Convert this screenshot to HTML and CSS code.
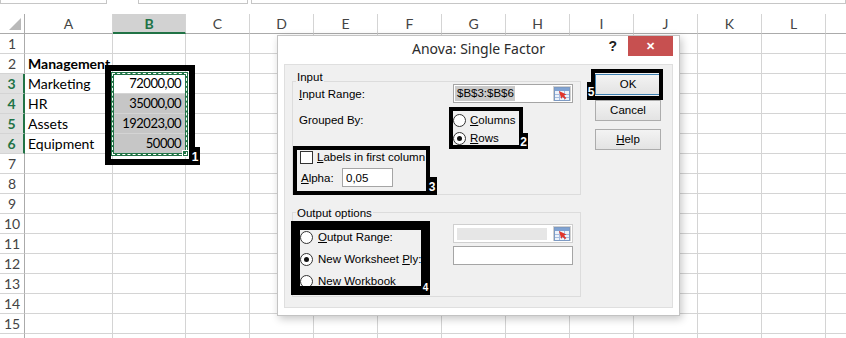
FILE: index.html
```html
<!DOCTYPE html>
<html lang="en">
<head>
    <meta charset="UTF-8">
    <title>Anova: Single Factor</title>
    <link rel="stylesheet" href="styles.css">
</head>
<body>
    <div class="topbar">
        <div class="namebox"></div>
        <div class="fxbox"></div>
        <div class="formula"></div>
    </div>

    <div class="sheet">
        <div class="corner"></div><div class="ch">A</div><div class="ch sel">B</div><div class="ch">C</div><div class="ch">D</div><div class="ch">E</div><div class="ch">F</div><div class="ch">G</div><div class="ch">H</div><div class="ch">I</div><div class="ch">J</div><div class="ch">K</div><div class="ch">L</div><div class="ch"></div>
        <div class="rh">1</div><div></div><div></div><div></div><div></div><div></div><div></div><div></div><div></div><div></div><div></div><div></div><div></div><div></div>
        <div class="rh">2</div><div class="bold">Management</div><div></div><div></div><div></div><div></div><div></div><div></div><div></div><div></div><div></div><div></div><div></div><div></div>
        <div class="rh sel">3</div><div>Marketing</div><div class="num">72000,00</div><div></div><div></div><div></div><div></div><div></div><div></div><div></div><div></div><div></div><div></div><div></div>
        <div class="rh sel">4</div><div>HR</div><div class="num hl">35000,00</div><div></div><div></div><div></div><div></div><div></div><div></div><div></div><div></div><div></div><div></div><div></div>
        <div class="rh sel">5</div><div>Assets</div><div class="num hl">192023,00</div><div></div><div></div><div></div><div></div><div></div><div></div><div></div><div></div><div></div><div></div><div></div>
        <div class="rh sel">6</div><div>Equipment</div><div class="num hl">50000</div><div></div><div></div><div></div><div></div><div></div><div></div><div></div><div></div><div></div><div></div><div></div>
        <div class="rh">7</div><div></div><div></div><div></div><div></div><div></div><div></div><div></div><div></div><div></div><div></div><div></div><div></div><div></div>
        <div class="rh">8</div><div></div><div></div><div></div><div></div><div></div><div></div><div></div><div></div><div></div><div></div><div></div><div></div><div></div>
        <div class="rh">9</div><div></div><div></div><div></div><div></div><div></div><div></div><div></div><div></div><div></div><div></div><div></div><div></div><div></div>
        <div class="rh">10</div><div></div><div></div><div></div><div></div><div></div><div></div><div></div><div></div><div></div><div></div><div></div><div></div><div></div>
        <div class="rh">11</div><div></div><div></div><div></div><div></div><div></div><div></div><div></div><div></div><div></div><div></div><div></div><div></div><div></div>
        <div class="rh">12</div><div></div><div></div><div></div><div></div><div></div><div></div><div></div><div></div><div></div><div></div><div></div><div></div><div></div>
        <div class="rh">13</div><div></div><div></div><div></div><div></div><div></div><div></div><div></div><div></div><div></div><div></div><div></div><div></div><div></div>
        <div class="rh">14</div><div></div><div></div><div></div><div></div><div></div><div></div><div></div><div></div><div></div><div></div><div></div><div></div><div></div>
        <div class="rh">15</div><div></div><div></div><div></div><div></div><div></div><div></div><div></div><div></div><div></div><div></div><div></div><div></div><div></div>
        <div class="rh"></div><div></div><div></div><div></div><div></div><div></div><div></div><div></div><div></div><div></div><div></div><div></div><div></div><div></div>
    </div>

    <!-- copy range marching ants around B3:B6 -->
    <div class="selection"></div>

    <div class="dialog">
        <div class="titlebar">
            <div class="title">Anova: Single Factor</div>
            <div class="controls">
                <span class="help">?</span>
                <span class="close">&#x2715;</span>
            </div>
        </div>
        <div class="panel">
            <div class="groups">
                <div class="group group-input">
                    <span class="group-title">Input</span>
                    <div class="field">
                        <span class="label-col"><u>I</u>nput Range:</span>
                        <div class="textbox">
                            <span class="value"><span class="picked">$B$3:$B$6</span></span>
                            <span class="picker">
                                <svg width="16" height="14" viewBox="0 0 16 14">
                                    <rect x="0.5" y="0.5" width="15" height="13" fill="#eef3fa" stroke="#7d9ac3"/>
                                    <rect x="1" y="1" width="14" height="3" fill="#7fa2d2"/>
                                    <path d="M1 7.5H15M1 10.5H15M5.5 4V13M10.5 4V13" stroke="#a7bde0" fill="none"/>
                                    <polygon points="5,4 12.5,7.5 9.8,8.4 12.3,11 11,12.3 8.5,9.7 7.3,12" fill="#e2342b"/>
                                </svg>
                            </span>
                        </div>
                    </div>
                    <div class="field grouped">
                        <span class="label-col">Grouped By:</span>
                        <div class="radios">
                            <div class="opt"><span class="radio"></span><span><u>C</u>olumns</span></div>
                            <div class="opt"><span class="radio on"></span><span><u>R</u>ows</span></div>
                        </div>
                    </div>
                    <div class="check-row"><span class="checkbox"></span><span><u>L</u>abels in first column</span></div>
                    <div class="alpha-row">
                        <span class="alpha-label"><u>A</u>lpha:</span>
                        <div class="textbox small">0,05</div>
                    </div>
                </div>

                <div class="group group-output">
                    <span class="group-title">Output options</span>
                    <div class="out-options">
                        <div class="opt tall"><span class="radio"></span><span><u>O</u>utput Range:</span></div>
                        <div class="opt tall"><span class="radio on"></span><span>New Worksheet <u>P</u>ly:</span></div>
                        <div class="opt tall"><span class="radio"></span><span>New <u>W</u>orkbook</span></div>
                    </div>
                    <div class="out-boxes">
                        <div class="textbox disabled">
                            <span class="value"><span class="grey"></span></span>
                            <span class="picker">
                                <svg width="16" height="14" viewBox="0 0 16 14">
                                    <rect x="0.5" y="0.5" width="15" height="13" fill="#eef3fa" stroke="#7d9ac3"/>
                                    <rect x="1" y="1" width="14" height="3" fill="#7fa2d2"/>
                                    <path d="M1 7.5H15M1 10.5H15M5.5 4V13M10.5 4V13" stroke="#a7bde0" fill="none"/>
                                    <polygon points="5,4 12.5,7.5 9.8,8.4 12.3,11 11,12.3 8.5,9.7 7.3,12" fill="#e2342b"/>
                                </svg>
                            </span>
                        </div>
                        <div class="textbox"></div>
                    </div>
                </div>
            </div>

            <div class="buttons">
                <div class="btn default">OK</div>
                <div class="btn">Cancel</div>
                <div class="btn"><u>H</u>elp</div>
            </div>
        </div>
    </div>

    <!-- numbered callouts drawn over the screenshot -->
    <div class="mark m1"><span class="mark-num">1</span></div>
    <div class="mark m2"><span class="mark-num">2</span></div>
    <div class="mark m3"><span class="mark-num">3</span></div>
    <div class="mark m4"><span class="mark-num">4</span></div>
    <div class="mark m5"><span class="mark-num">5</span></div>
</body>
</html>
```

FILE: styles.css
```css
body {
    margin: 0;
    width: 846px;
    height: 338px;
    overflow: hidden;
    position: relative;
    background: #fff;
    font-family: Lato, "Liberation Sans", sans-serif;
}

/* remains of the name box / formula bar */
.topbar {
    display: flex;
    height: 14px;
}
.topbar div {
    height: 4px;
    box-sizing: border-box;
    border: 1px solid #c6c6c6;
    border-top: none;
}
.namebox {
    width: 107px;
}
.fxbox {
    width: 110px;
    margin-left: 31px;
}
.formula {
    flex: 1;
    margin-left: 3px;
}

/* worksheet */
.sheet {
    display: grid;
    grid-template-columns: 25px 88px 73px repeat(11, 64px);
    grid-auto-rows: 20px;
    width: 890px;
    font-size: 14px;
}
.sheet > div {
    box-sizing: border-box;
    border-right: 1px solid #d4d4d4;
    border-bottom: 1px solid #d4d4d4;
    padding: 0 3px;
    line-height: 19px;
    white-space: nowrap;
    color: #000;
}
.sheet .ch {
    text-align: center;
    color: #444;
    border-bottom-color: #ababab;
}
.sheet .ch.sel {
    background: #d2d2d2;
    color: #217346;
    font-weight: bold;
    border-bottom: 2px solid #217346;
}
.sheet .rh {
    padding: 0;
    text-align: center;
    color: #444;
    border-right-color: #ababab;
}
.sheet .rh.sel {
    background: #e1e1e1;
    color: #217346;
    font-weight: bold;
    border-right: 2px solid #217346;
}
.sheet .corner {
    position: relative;
    border-right-color: #ababab;
    border-bottom-color: #ababab;
}
.corner::after {
    content: "";
    position: absolute;
    right: 3px;
    bottom: 3px;
    border-left: 12px solid transparent;
    border-bottom: 12px solid #b9b9b9;
}
.sheet .num {
    text-align: right;
    font-size: 13px;
    letter-spacing: -0.5px;
    padding-right: 4px;
}
.sheet .bold {
    font-weight: bold;
}
.sheet .hl {
    background: #c6c6c6;
}

.selection {
    position: absolute;
    left: 111px;
    top: 72px;
    width: 77px;
    height: 84px;
    box-sizing: border-box;
    border: 3px solid #217346;
}
.selection::after {
    content: "";
    position: absolute;
    left: -2px;
    top: -2px;
    right: -2px;
    bottom: -2px;
    border: 1px dashed #fff;
}
.selection::before {
    content: "";
    position: absolute;
    right: -4px;
    bottom: -4px;
    width: 5px;
    height: 5px;
    background: #217346;
    border: 1px solid #fff;
}

/* dialog */
.dialog {
    position: absolute;
    left: 277px;
    top: 35px;
    width: 403px;
    height: 281px;
    box-sizing: border-box;
    border: 1px solid #c3c3c3;
    background: #fff;
    box-shadow: 2px 3px 8px rgba(0, 0, 0, 0.22);
    padding: 0 6px 7px;
    display: flex;
    flex-direction: column;
    font-family: "Liberation Sans", Arial, sans-serif;
    font-size: 11.5px;
    color: #000;
}
.titlebar {
    height: 28px;
    display: grid;
    grid-template-columns: 1fr auto 1fr;
}
.title {
    grid-column: 2;
    font-family: "Noto Sans", sans-serif;
    font-size: 14px;
    line-height: 26px;
    color: #2b2b2b;
}
.controls {
    justify-self: end;
    display: flex;
    align-items: flex-start;
}
.help {
    font-weight: bold;
    font-size: 14px;
    line-height: 20px;
    margin-right: 11px;
    color: #222;
}
.close {
    width: 45px;
    height: 20px;
    background: #c75050;
    color: #fff;
    text-align: center;
    line-height: 20px;
    font-size: 11px;
    font-weight: bold;
}
.panel {
    flex: 1;
    display: flex;
    background: #f0f0f0;
    border: 1px solid #dfdfdf;
    padding-left: 7px;
}
.groups {
    width: 289px;
}
.group {
    position: relative;
    box-sizing: border-box;
    border: 1px solid #dcdcdc;
}
.group-title {
    position: absolute;
    left: 3px;
    padding: 0 1px;
    line-height: 14px;
    background: #f0f0f0;
}
.group-input {
    margin-top: 16px;
    height: 114px;
    padding: 2px 0 0 6px;
}
.group-input .group-title {
    top: -12px;
}
.group-output {
    margin-top: 17px;
    height: 85px;
    display: flex;
    padding-left: 7px;
}
.group-output .group-title {
    top: -7px;
}

.field {
    display: flex;
    align-items: center;
}
.label-col {
    width: 154px;
}
.field.grouped {
    align-items: flex-start;
    margin-top: 8px;
}
.field.grouped .label-col {
    line-height: 18px;
}
.opt {
    display: flex;
    align-items: center;
    height: 18px;
}
.opt .radio {
    margin-right: 4px;
}
.opt.tall {
    height: 22px;
}
.opt.tall .radio {
    margin-right: 5px;
}
.radio {
    display: inline-block;
    position: relative;
    width: 13px;
    height: 13px;
    box-sizing: border-box;
    border: 1px solid #333;
    border-radius: 50%;
    background: #fff;
}
.radio.on::after {
    content: "";
    position: absolute;
    left: 3px;
    top: 3px;
    width: 5px;
    height: 5px;
    border-radius: 50%;
    background: #111;
}
.check-row {
    display: flex;
    align-items: center;
    height: 14px;
    margin-top: 3px;
    padding-left: 1px;
}
.checkbox {
    width: 13px;
    height: 13px;
    box-sizing: border-box;
    border: 1px solid #333;
    background: #fff;
    margin-right: 4px;
}
.alpha-row {
    display: flex;
    align-items: center;
    margin-top: 4px;
    padding-left: 2px;
}
.alpha-label {
    width: 41px;
}

.textbox {
    width: 120px;
    height: 19px;
    box-sizing: border-box;
    border: 1px solid #a5a5a5;
    background: #fff;
    display: flex;
    align-items: center;
    padding: 0 1px 0 1px;
}
.textbox.small {
    width: 51px;
    padding-left: 3px;
}
.textbox .value {
    flex: 1;
    display: flex;
}
.picked {
    background: #cacaca;
    line-height: 15px;
    padding: 0 1px 0 2px;
}
.picker {
    display: flex;
    width: 18px;
    height: 15px;
    align-items: center;
    justify-content: center;
    background: #e9e9e9;
    border: 1px solid #d0d0d0;
    box-sizing: border-box;
}
.textbox.disabled {
    border-color: #cfcfcf;
    padding-left: 3px;
}
.grey {
    width: 90px;
    height: 12px;
    background: #e6e6e6;
}
.out-options {
    width: 153px;
    padding-top: 13px;
}
.out-boxes {
    padding-top: 11px;
    display: flex;
    flex-direction: column;
    gap: 3px;
}

.buttons {
    margin: 9px 0 0 14px;
}
.btn {
    width: 66px;
    height: 21px;
    box-sizing: border-box;
    border: 1px solid #acacac;
    background: linear-gradient(#f3f3f3, #e3e3e3);
    text-align: center;
    line-height: 19px;
    margin-bottom: 5px;
}
.btn.default {
    border-color: #3c7fb1;
}
.btn + .btn + .btn {
    margin-top: 8px;
}

/* black callout boxes */
.mark {
    position: absolute;
    box-sizing: border-box;
    border: 4px solid #000;
}
.mark-num {
    position: absolute;
    background: #000;
    color: #fff;
    font-family: "Liberation Sans", Arial, sans-serif;
    font-weight: bold;
    font-size: 12px;
    line-height: 20px;
    text-align: center;
}
.m1 {
    left: 105px;
    top: 65px;
    width: 90px;
    height: 100px;
    border-width: 6px;
}
.m1 .mark-num {
    right: -11px;
    bottom: -6px;
    width: 10px;
    height: 18px;
}
.m2 {
    left: 449px;
    top: 107px;
    width: 74px;
    height: 42px;
}
.m2 .mark-num {
    right: -9px;
    bottom: -4px;
    width: 9px;
    height: 16px;
    line-height: 18px;
}
.m3 {
    left: 293px;
    top: 146px;
    width: 137px;
    height: 49px;
}
.m3 .mark-num {
    right: -11px;
    bottom: -4px;
    width: 10px;
    height: 18px;
}
.m4 {
    left: 291px;
    top: 221px;
    width: 139px;
    height: 74px;
    border-width: 9px;
}
.m4 .mark-num {
    right: -9px;
    bottom: -9px;
    width: 9px;
    height: 15px;
    font-size: 10px;
    line-height: 16px;
}
.m5 {
    left: 591px;
    top: 69px;
    width: 72px;
    height: 31px;
}
.m5 .mark-num {
    left: -8px;
    bottom: -4px;
    width: 8px;
    height: 18px;
}
```
